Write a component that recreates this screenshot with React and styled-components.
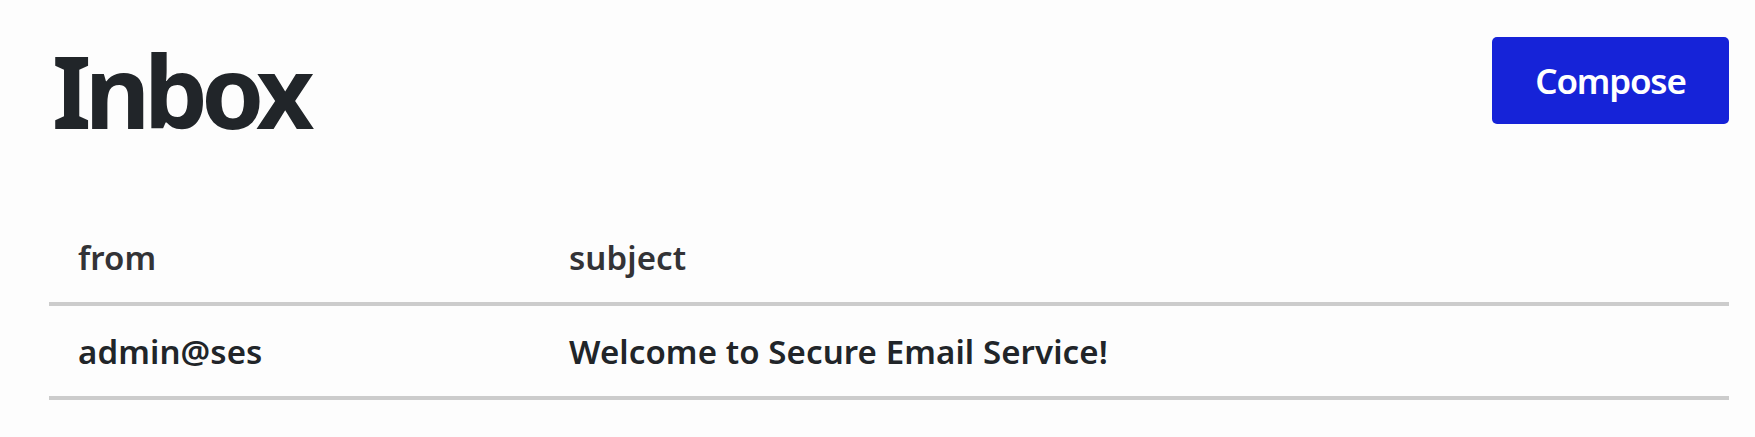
import React from 'react'
import styled, { createGlobalStyle } from 'styled-components'

const GlobalStyle = createGlobalStyle`
  body {
    margin: 0;
    background: #fdfdfd;
    font-family: "Noto Sans", "Open Sans", sans-serif;
    color: #212529;
  }
`;

const Page = styled.div`
  padding: 0 26px 0 49px;
`;

const Header = styled.div`
  display: flex;
  justify-content: space-between;
  align-items: flex-start;
`;

const Title = styled.h1`
  margin: 39px 0 0 0;
  padding-left: 3px;
  font-size: 101px;
  font-weight: 700;
  line-height: 102px;
  letter-spacing: -6.5px;
  color: #212529;
`;

const ComposeButton = styled.button`
  margin-top: 37px;
  width: 237px;
  height: 87px;
  border: none;
  border-radius: 5px;
  background: #1623d8;
  color: #ffffff;
  font-family: inherit;
  font-size: 35px;
  font-weight: 600;
  letter-spacing: -1.2px;
  cursor: pointer;
`;

const Table = styled.table`
  width: 100%;
  margin-top: 71px;
  border-collapse: collapse;
`;

const Cell = styled.td`
  height: 90px;
  padding: 0 0 0 29px;
  text-align: left;
  vertical-align: middle;
  border-bottom: 4px solid #cccccc;
  font-size: 33px;
  font-weight: 600;
  letter-spacing: 0.1px;
  color: ${p => (p.$head ? '#333336' : '#212529')};
  width: ${p => p.$width || 'auto'};
`;

const messages = [
  { from: 'admin@ses', subject: 'Welcome to Secure Email Service!' },
]

function App() {
  return (
    <Page>
      <GlobalStyle />
      <Header>
        <Title>Inbox</Title>
        <ComposeButton>Compose</ComposeButton>
      </Header>
      <Table>
        <thead>
          <tr>
            <Cell as="th" $head $width="462px">from</Cell>
            <Cell as="th" $head>subject</Cell>
          </tr>
        </thead>
        <tbody>
          {messages.map((m, i) => (
            <tr key={i}>
              <Cell>{m.from}</Cell>
              <Cell>{m.subject}</Cell>
            </tr>
          ))}
        </tbody>
      </Table>
    </Page>
  )
}

export default App
